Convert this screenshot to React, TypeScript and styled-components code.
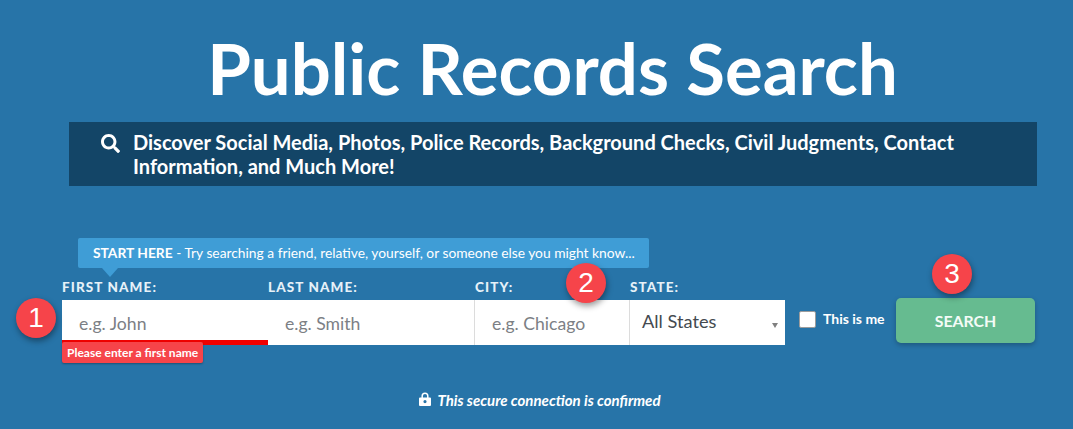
import React from "react";
import styled, { createGlobalStyle } from "styled-components";
import { FaSearch } from "react-icons/fa";

const GlobalStyle = createGlobalStyle`
  html, body {
    margin: 0;
    padding: 0;
    background: #2774a8;
    font-family: "Lato", "Liberation Sans", sans-serif;
    overflow: hidden;
  }
`;

const Page = styled.div`
  width: 1073px;
  height: 429px;
  background: #2774a8;
  display: flex;
  flex-direction: column;
  color: #fff;
`;

const Title = styled.h1`
  margin: 22px 0 0;
  height: 100px;
  font-size: 70.7px;
  line-height: 92px;
  font-weight: 700;
  text-align: center;
  padding-left: 32px;
`;

const Banner = styled.div`
  margin-left: 69px;
  width: 968px;
  height: 64px;
  flex: none;
  box-sizing: border-box;
  padding: 8px 60px 0 32px;
  background: #134567;
  display: flex;
  gap: 13px;
`;

const SearchIcon = styled(FaSearch)`
  flex: none;
  width: 19px;
  height: 19px;
  margin-top: 4px;
`;

const BannerText = styled.p`
  margin: 0;
  font-size: 20px;
  line-height: 24px;
  font-weight: 700;
`;

const FormArea = styled.div`
  position: relative;
  margin-top: 52px;
  height: 105px;
  flex: none;
`;

const Tooltip = styled.div`
  position: absolute;
  left: 78px;
  top: 0;
  width: 571px;
  height: 30px;
  box-sizing: border-box;
  padding-left: 15px;
  background: #3f9dd6;
  border-radius: 2px;
  font-size: 13.8px;
  line-height: 29px;
  white-space: nowrap;

  &::after {
    content: "";
    position: absolute;
    left: 24px;
    top: 30px;
    border-left: 8px solid transparent;
    border-right: 8px solid transparent;
    border-top: 9px solid #3f9dd6;
  }

  b {
    font-weight: 700;
  }
`;

const Row = styled.div`
  display: flex;
  align-items: flex-start;
  padding: 41px 0 0 62px;
`;

const Field = styled.div<{ $width: number }>`
  position: relative;
  width: ${(p) => p.$width}px;
  flex: none;
`;

const Label = styled.div<{ $inset?: boolean }>`
  height: 21px;
  padding-left: ${(p) => (p.$inset ? 1 : 0)}px;
  font-size: 13.5px;
  line-height: 16px;
  font-weight: 900;
  letter-spacing: 1.1px;
  color: #e6f1f8;
  text-transform: uppercase;
`;

const Input = styled.div<{ $error?: boolean; $divider?: boolean }>`
  height: 45px;
  box-sizing: border-box;
  background: #fff;
  padding-left: 17px;
  font-size: 17.6px;
  line-height: 47px;
  color: #7c8085;
  border-left: ${(p) => (p.$divider ? "1px solid #dcdcdc" : "0")};
  border-bottom: ${(p) => (p.$error ? "5px solid #f00000" : "0")};
`;

const SelectBox = styled.div`
  position: relative;
  height: 45px;
  box-sizing: border-box;
  background: #fff;
  border-left: 1px solid #dcdcdc;
  padding-left: 12px;
  font-size: 18.2px;
  line-height: 42px;
  color: #444a50;

  &::after {
    content: "";
    position: absolute;
    right: 7px;
    top: 23px;
    border-left: 3.5px solid transparent;
    border-right: 3.5px solid transparent;
    border-top: 5px solid #808080;
  }
`;

const ErrorTag = styled.div`
  position: absolute;
  left: 0;
  top: 63px;
  height: 21px;
  padding: 0 5px;
  background: #f6444a;
  border-radius: 2px;
  box-shadow: 0 1px 2px rgba(0, 0, 0, 0.3);
  font-size: 12px;
  line-height: 21px;
  font-weight: 700;
  white-space: nowrap;
`;

const CheckGroup = styled.label`
  display: flex;
  align-items: center;
  gap: 7px;
  margin: 31px 0 0 14px;
  font-size: 14px;
  font-weight: 700;
  line-height: 18px;
  width: 85px;
  flex: none;
  white-space: nowrap;
`;

const CheckBox = styled.span`
  flex: none;
  width: 15px;
  height: 15px;
  background: #fff;
  border: 1px solid #9c9c9c;
  border-radius: 2px;
`;

const SearchButton = styled.button`
  width: 139px;
  height: 45px;
  margin: 19px 0 0 12px;
  border: 0;
  border-radius: 5px;
  background: #66bb90;
  box-shadow: 0 2px 5px rgba(0, 0, 0, 0.25);
  color: #f4fbf7;
  font-family: inherit;
  font-size: 15.8px;
  font-weight: 700;
`;

const StepBadge = styled.span<{ $x: number; $y: number }>`
  position: absolute;
  left: ${(p) => p.$x}px;
  top: ${(p) => p.$y}px;
  width: 40px;
  height: 40px;
  border-radius: 50%;
  background: #f6444a;
  box-shadow: 1px 3px 6px rgba(0, 0, 0, 0.4);
  font-family: "Liberation Sans", sans-serif;
  font-size: 28px;
  line-height: 40px;
  text-align: center;
  color: #fff;
`;

const SecureNote = styled.div`
  margin-top: 49px;
  display: flex;
  justify-content: center;
  align-items: center;
  gap: 6px;
  padding-left: 7px;
  font-size: 15px;
  line-height: 16px;
  font-style: italic;
  font-weight: 700;
`;

const LockSvg = styled.svg`
  width: 12px;
  height: 14px;
  margin-top: -2px;
  flex: none;
`;

function LockIcon() {
  return (
    <LockSvg viewBox="0 0 12 14">
      <path d="M3.2 6V4a2.8 2.8 0 0 1 5.6 0v2" fill="none" stroke="#fff" strokeWidth="1.5" />
      <path
        fillRule="evenodd"
        fill="#fff"
        d="M1 5.6h10a1 1 0 0 1 1 1V13a1 1 0 0 1-1 1H1a1 1 0 0 1-1-1V6.6a1 1 0 0 1 1-1zM6 8a1.6 1.6 0 1 0 0 3.2A1.6 1.6 0 0 0 6 8z"
      />
    </LockSvg>
  );
}

export default function App() {
  return (
    <Page>
      <GlobalStyle />
      <Title>Public Records Search</Title>
      <Banner>
        <SearchIcon />
        <BannerText>
          Discover Social Media, Photos, Police Records, Background Checks, Civil Judgments, Contact
          Information, and Much More!
        </BannerText>
      </Banner>
      <FormArea>
        <Tooltip>
          <b>START HERE</b> - Try searching a friend, relative, yourself, or someone else you might know...
        </Tooltip>
        <Row>
          <Field $width={206}>
            <Label>First Name:</Label>
            <Input $error>e.g. John</Input>
            <ErrorTag>Please enter a first name</ErrorTag>
          </Field>
          <Field $width={206}>
            <Label>Last Name:</Label>
            <Input>e.g. Smith</Input>
          </Field>
          <Field $width={155}>
            <Label $inset>City:</Label>
            <Input $divider>e.g. Chicago</Input>
          </Field>
          <Field $width={156}>
            <Label $inset>State:</Label>
            <SelectBox>All States</SelectBox>
          </Field>
          <CheckGroup>
            <CheckBox />
            This is me
          </CheckGroup>
          <SearchButton>SEARCH</SearchButton>
        </Row>
        <StepBadge $x={16} $y={60}>1</StepBadge>
        <StepBadge $x={566} $y={25}>2</StepBadge>
        <StepBadge $x={932} $y={16}>3</StepBadge>
      </FormArea>
      <SecureNote>
        <LockIcon />
        This secure connection is confirmed
      </SecureNote>
    </Page>
  );
}
